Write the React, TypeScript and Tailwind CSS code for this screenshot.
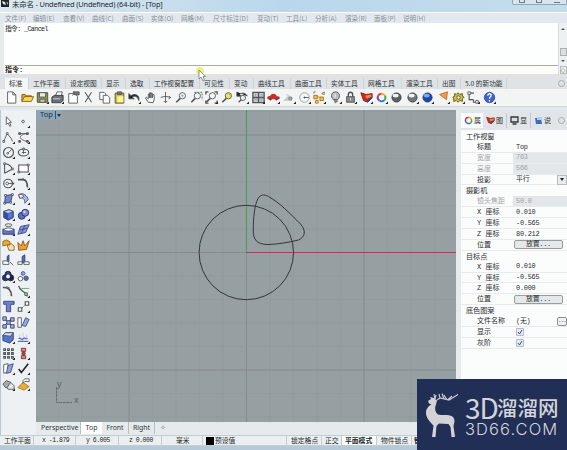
import type { ReactNode } from "react";

const menus = [
  { label: "文件(F)", w: "w-[28px]" },
  { label: "编辑(E)", w: "w-[30px]" },
  { label: "查看(V)", w: "w-[29px]" },
  { label: "曲线(C)", w: "w-[30px]" },
  { label: "曲面(S)", w: "w-[29px]" },
  { label: "实体(O)", w: "w-[30px]" },
  { label: "网格(M)", w: "w-[32px]" },
  { label: "尺寸标注(D)", w: "w-[44px]" },
  { label: "变动(T)", w: "w-[29px]" },
  { label: "工具(L)", w: "w-[29px]" },
  { label: "分析(A)", w: "w-[30px]" },
  { label: "渲染(R)", w: "w-[29px]" },
  { label: "面板(P)", w: "w-[29px]" },
  { label: "说明(H)", w: "w-[29px]" },
];

const toolTabs = [
  { label: "标准", w: "w-[24px]" },
  { label: "工作平面", w: "w-[37px]" },
  { label: "设定视图", w: "w-[36px]" },
  { label: "显示", w: "w-[24px]" },
  { label: "选取", w: "w-[24px]" },
  { label: "工作视窗配置", w: "w-[50px]" },
  { label: "可见性", w: "w-[30px]" },
  { label: "变动", w: "w-[24px]" },
  { label: "曲线工具", w: "w-[37px]" },
  { label: "曲面工具", w: "w-[36px]" },
  { label: "实体工具", w: "w-[37px]" },
  { label: "网格工具", w: "w-[38px]" },
  { label: "渲染工具", w: "w-[36px]" },
  { label: "出图", w: "w-[23px]" },
  { label: "5.0 的新功能", w: "w-[46px]" },
];

// Every glyph is drawn on a 15x15 grid
const Corner = () => <path d="M15 12v3h-3z" fill="#222" stroke="none" />;

const Icon = ({ children, more }: { children: ReactNode; more?: boolean }) => (
  <svg viewBox="0 0 15 15" className="h-[13px] w-[13px]" fill="none" stroke="#505457" strokeWidth="1">
    {children}
    {more && <Corner />}
  </svg>
);

const Wheel = () => (
  <g strokeWidth="2.2">
    <path d="M7.5 3a4.5 4.5 0 0 1 4 2.5" stroke="#e8b020" />
    <path d="M11.5 5.5a4.5 4.5 0 0 1-1 5.4" stroke="#48a848" />
    <path d="M10.5 10.9a4.5 4.5 0 0 1-5.5 0" stroke="#2878d0" />
    <path d="M5 10.9a4.5 4.5 0 0 1-1.5-5.4" stroke="#8040b0" />
    <path d="M3.5 5.5a4.5 4.5 0 0 1 4-2.5" stroke="#e03030" />
  </g>
);

const Shield = () => (
  <>
    <path d="M1 2l6 2 7-1v5l-5 5-5-2z" fill="#d8281c" stroke="#801810" />
    <path d="M6 5.500l7-1.500v3L8 9z" fill="#f09030" stroke="none" />
    <path d="M7 10l6-3v2l-4 4z" fill="#2848a8" stroke="none" />
  </>
);

const Ball = ({ fill, shine }: { fill: string; shine: string }) => (
  <>
    <circle cx="7.5" cy="7.5" r="5.3" fill={fill} stroke="#383c44" />
    <ellipse cx="6.5" cy="5.3" rx="3.500" ry="2.200" fill={shine} stroke="none" />
  </>
);

const Lens = ({ fill = "#f4f6f7" }: { fill?: string }) => (
  <>
    <circle cx="8.5" cy="5.5" r="3.6" fill={fill} />
    <path d="M6 8.5L1.5 13" strokeWidth="1.8" />
  </>
);

const standardTools: { more?: boolean; art: ReactNode }[] = [
  { art: <path d="M3 1h6l3.500 3.500V14H3zM9 1v3.500h3.500" fill="#fff" /> },
  { art: <><path d="M1 12V4h4l1 1.500h6V7" fill="#e8a820" stroke="#7c5a10" /><path d="M1 12l3-5.500h10.500L12 12z" fill="#fbd858" stroke="#7c5a10" /></> },
  { more: true, art: <><path d="M1.500 2h12v11h-12z" fill="#909646" stroke="#44482a" /><path d="M4 2h7v5H4z" fill="#e9ecea" /><path d="M4.500 9.500h6V13h-6z" fill="#c8ccc4" /></> },
  { more: true, art: <><path d="M5 6l2-5h6l-1 5" fill="#fff" /><path d="M1 7l3-2h10v6l-3 2.500H1z" fill="#6c7178" stroke="#33363a" /><path d="M2.500 9h8" stroke="#dde" /></> },
  { art: <><path d="M2 3h7l3 3v8H2z" fill="#fff" /><path d="M7 1h7v3.500H9zM6 5l3-2" fill="#777" /></> },
  { art: <path d="M3.500 1.500l7.500 11.500M11 1.500L3.500 13" strokeWidth="1.200" /> },
  { art: <><path d="M2 1.500h5l2 2V10H2z" fill="#fff" /><path d="M6 5h5l2.500 2.500V14H6z" fill="#fff" /></> },
  { art: <><path d="M2.500 2.500h10V14h-10z" fill="#d8c034" stroke="#4e4820" /><path d="M5 1h5v3H5z" fill="#777" /><path d="M5 6h7v7H5z" fill="#fff59b" stroke="none" /></> },
  { more: true, art: <path d="M1 3v6h6L5 7c3-2 6-1 7.500 4 1.500-6-4.500-9-9-5.500z" fill="#222" /> },
  { art: <path d="M5 13L1.500 8l1.200-.8L5 9V3.500h1.500V8 2H8v6-5.500h1.500V8l.5-4h1.500L12 9l-1.500 4.500z" fill="#f3f3f0" /> },
  { art: <><path d="M7.500 1v12M5.500 11.500l2 2 2-2M2 7.500c3-1.500 8-1.500 11 0" /><path d="M11 9l2.500-1.500-2-1.500" /></> },
  { art: <><Lens /><path d="M7 5.500h3M8.500 4v3" stroke="#999" /></> },
  { art: <><path d="M5 1.500h9v9" strokeDasharray="2 1.500" /><Lens /></> },
  { more: true, art: <><path d="M1 4V1h3M11 1h3v3M14 11v3h-3M4 14H1v-3" strokeWidth="1.500" /><Lens /></> },
  { art: <><Lens fill="#ede45c" /><path d="M9 3l2 2" stroke="#b3901c" /></> },
  { more: true, art: <><path d="M1 1v5h5L4 4c4-3 8-1 9 2" fill="#222" /><circle cx="8" cy="8" r="3" fill="#eee" /><path d="M6 10l-3 3" strokeWidth="1.600" /></> },
  { more: true, art: <><path d="M1 1.500h13v12H1zM7.500 1.500v12M1 7.500h13" fill="#c5cbcc" strokeWidth="1.500" /><path d="M4 3v3M10.500 9v3M3 10h3M10 4.500h3" stroke="#999" /></> },
  { more: true, art: <><path d="M1 9V7l3-1 1.500-2h4L11 6.500l3 .5v2z" fill="#d32b29" stroke="#b02222" /><circle cx="4" cy="9.500" r="1" fill="#333" /><circle cx="11" cy="9.500" r="1" fill="#333" /></> },
  { more: true, art: <><path d="M1 11l5-5 4 5z" fill="#c4c8c9" stroke="#c9cdce" /><circle cx="8.500" cy="8.500" r="2" fill="#9ca0a1" stroke="#888" /><path d="M4 4l5 3" stroke="#bbb" /></> },
  { more: true, art: <><circle cx="7.500" cy="7.500" r="5.500" stroke="#95999b" /><path d="M7.500 7.500h5" /><circle cx="7.500" cy="7.500" r=".7" fill="#333" /></> },
  { more: true, art: <><path d="M1 5h4v4H1zM8 7h4v4H8z" fill="#f1c83c" stroke="#a36c20" /><path d="M1 3V1h2M13 1v3l-3-1z" stroke="#7b7348" /><path d="M5 6l4 2" stroke="#b57b28" /><path d="M3 11h3v3H3z" fill="#f6e17c" stroke="#a36c20" /></> },
  { more: true, art: <><path d="M5 10C1 6 3 1 7.500 1S14 6 10 10z" fill="#b7bcbd" /><path d="M5.500 10.500h4.500M6 12h4M6.500 13.500h2" /><path d="M7 3v5" stroke="#fff" /></> },
  { more: true, art: <><path d="M5 7V4c0-3.500 5-3.500 5 0v3" strokeWidth="1.600" /><path d="M3 6.500h9V13H3z" fill="#868c90" /><path d="M7.500 8v3" stroke="#ddd" /></> },
  { more: true, art: <Shield /> },
  { more: true, art: <Wheel /> },
  { art: <Ball fill="#5b6064" shine="#f2f4f4" /> },
  { more: true, art: <Ball fill="#70777a" shine="#f4f5f6" /> },
  { more: true, art: <Ball fill="#1647b8" shine="#79aaf0" /> },
  { more: true, art: <path d="M3 4l9-3-1 9z" fill="#efa13d" stroke="#b96a28" /> },
  { more: true, art: <><path d="M3 3l2 1 2-2 2 2 3-1v3l2 1-2 2v3l-3-1-2 2-2-2-3 1V9L1 7l2-1z" fill="#d6bd35" stroke="#594f1b" /><circle cx="7.500" cy="7.500" r="2" fill="#f4f1d8" /></> },
  { more: true, art: <><path d="M4 2.500h4M2.500 4v6h5M7.500 10v3h4" strokeWidth="1.300" /><path d="M1 1h3v3H1zM10 11h3v3h-3z" fill="#fff" /></> },
  { more: true, art: <><circle cx="7.500" cy="7.500" r="6" fill="#3f62cc" stroke="#354d95" /><path d="M5.500 5.500c0-3 4-3 4-.5 0 2-2 1.500-2 3.800M7.500 10.500v1.500" stroke="#fff" strokeWidth="1.500" /></> },
];

const sideTools: { more?: boolean; art: ReactNode }[] = [
  { art: <path d="M5 2v9l2-2 2 4 1.500-.8L8.500 8.500H11z" fill="#fff" /> },
  { more: true, art: <circle cx="7" cy="7.500" r="1.500" /> },
  { more: true, art: <><path d="M2 12L6 3l5 6 1 3" /><path d="M1 11h2v2H1zM5 2h2v2H5z" fill="#fff" /></> },
  { more: true, art: <><path d="M3 3h9M11 3c-12 2-7 8 1 9" /><path d="M2 2h2v2H2zM11 2h2v2h-2zM2 11h2v2H2zM11 11h2v2h-2z" fill="#666" /></> },
  { more: true, art: <><circle cx="7.500" cy="7.500" r="5.700" strokeWidth="1.300" /><path d="M7 8l4-4" /><circle cx="6.500" cy="8.500" r="1" fill="#fff" /></> },
  { more: true, art: <><ellipse cx="7.500" cy="7.500" rx="6" ry="4" strokeWidth="1.300" /><path d="M7.500 2v7M5.500 7.500h5" /><path d="M6.500 2.500h2v2h-2z" fill="#fff" /></> },
  { more: true, art: <><path d="M3 13V2c6 0 8 4 9 6L3 13" strokeWidth="1.200" /><path d="M2 1h2v2H2zM11 7h2v2h-2z" fill="#fff" /></> },
  { more: true, art: <><path d="M2 3.500h11v8H2z" fill="#fff" strokeWidth="1.200" /><path d="M1 10.500h2v2H1zM12 2.500h2v2h-2z" fill="#fff" /></> },
  { more: true, art: <><circle cx="7" cy="7.500" r="5" strokeWidth="1.200" /><path d="M5 7.500h9M11 5.500l3 2-3 2" /><circle cx="6" cy="7.500" r="1.500" fill="#fff" /></> },
  { more: true, art: <><path d="M1 3h6c4 0 5 3 5 9" strokeWidth="1.800" /><path d="M7 1v3" /></> },
  { more: true, art: <><path d="M4 4l8-1-2 9-7 1z" fill="#7184cf" stroke="#323b6c" /><path d="M3 3h2v2H3zM11 2h2v2h-2zM2 12h2v2H2zM9 11h2v2H9z" fill="#fff" /></> },
  { more: true, art: <><path d="M2 3c5-3 10 1 11 6l-4 4C9 8 7 6 3 7z" fill="#a9b4e4" stroke="#4b537c" /><path d="M2 3c2-1 5 0 6 2L5 7H3z" fill="#eef" /></> },
  { more: true, art: <><path d="M2 4l6-2 5 2v7l-6 3-5-3z" fill="#2f4fb6" stroke="#263874" /><path d="M2 4l6-2 5 2-6 2.500z" fill="#bccaf4" /><path d="M7 6.500V13l5-2.300V4.500z" fill="#5776d4" stroke="none" /></> },
  { more: true, art: <><circle cx="5.500" cy="9" r="4" fill="#5c70c8" stroke="#202a5c" /><circle cx="9.500" cy="5.500" r="4" fill="#7b8cdc" stroke="#202a5c" /><circle cx="8.500" cy="4.500" r="1.300" fill="#dce3fc" stroke="none" /></> },
  { more: true, art: <><ellipse cx="7.500" cy="2.500" rx="4" ry="1.600" /><path d="M1 7h13v6H1z" fill="#5d74cc" stroke="#2b386f" /><ellipse cx="7.500" cy="7.500" rx="5" ry="1.800" fill="#fff" /></> },
  { more: true, art: <><path d="M4 4l10-2-4 9-9 2z" fill="#8698e0" stroke="#36427c" /><path d="M3 8l9-2M9 3L5 12" stroke="#36437f" /></> },
  { art: <><path d="M1 3l4-2 4 2v4H5L1 8z" fill="#f0a92b" stroke="#8b6523" /><path d="M6 7h3l1-2 4 3v5H8z" fill="#fce0a0" stroke="#7b6543" /></> },
  { art: <path d="M2 13L1 4l4 4 2-6 2 6 5-6-3 10z" fill="#eba22c" stroke="#86551b" /> },
  { art: <><path d="M8 1v7L6 10V3z" fill="#546dc8" stroke="#2b3971" /><path d="M1 8h5l2 2v2H1z" fill="#fff" /><path d="M9 9l4 4" /></> },
  { art: <><path d="M9 1v9H6V3z" fill="#546dc8" stroke="#2b3971" /><path d="M1 9h5v3H1zM8 9h6v3H8z" fill="#fff" /></> },
  { more: true, art: <><circle cx="7" cy="5" r="3.500" fill="#34477f" stroke="#171d38" /><circle cx="4" cy="9" r="3.500" fill="#283863" stroke="#171d38" /><circle cx="10" cy="9" r="3.500" fill="#1c284a" stroke="#171d38" /><circle cx="7" cy="7.500" r="2.200" fill="#f3f4f9" stroke="none" /></> },
  { art: <><circle cx="7" cy="4" r="2.200" fill="#8fa0df" stroke="#4c5e9c" /><circle cx="4" cy="10" r="2.600" fill="#fff" /><circle cx="10.500" cy="9.500" r="2.600" fill="#536bbc" /></> },
  { art: <><path d="M1 3c6-1 10 3 10 10" strokeWidth="1.800" /><path d="M5 2l4 2" stroke="#548652" strokeWidth="1.600" /></> },
  { more: true, art: <><path d="M2 1c1 6 5 5 8 9l2 3" strokeWidth="1.500" /><path d="M5 4h9" stroke="#68a065" /><path d="M9 9h3v3H9z" fill="#c4d3c2" /></> },
  { art: <path d="M2 1.500h12V5h-4v8.500H5V5H2z" fill="#6a80d6" stroke="#34427c" /> },
  { more: true, art: <><path d="M4 11l7-7" strokeDasharray="1.500 1" /><path d="M1.500 9h4v4h-4zM9.500 2h4v4h-4z" fill="#fff" strokeWidth="1.300" /></> },
  { art: <><path d="M3 3l8 8M11 3l-8 8" /><path d="M1 1h4v4H1zM10 2h4v4h-4zM5.500 5.500h4v4h-4zM1 10h4v4H1zM10 10h4v4h-4z" fill="#a7b4ea" stroke="#303b67" /></> },
  { art: <><path d="M1 2h4v11H1z" fill="#fff" /><path d="M10 2l4 2-4 8-4-1z" fill="#94a7eb" stroke="#3f4b7c" /></> },
  { more: true, art: <><path d="M1 5l3-3h9v8l-4 4-8-3z" fill="#5873cc" stroke="#2d3b74" /><path d="M1 5l3-3h9l-3 4z" fill="#d4dcf6" /></> },
  { more: true, art: <><path d="M1 12h12M2 9c2-3 3 3 5 0s3 2 5-1" stroke="#6073b5" strokeWidth="1.500" /><path d="M3 4v3M7 2v5M11 4v3" stroke="#c8cede" /></> },
  { more: true, art: <path d="M2 2h2v2H2zM6.500 2h2v2h-2zM11 2h2v2h-2zM2 6.500h2v2H2zM6.500 6.500h2v2h-2zM11 6.500h2v2h-2zM2 11h2v2H2zM6.500 11h2v2h-2zM11 11h2v2h-2z" fill="#cbd0d2" strokeWidth="1.200" /> },
  { more: true, art: <><path d="M7.500 2v11" stroke="#6b2424" strokeWidth="2" /><path d="M5 1.500h5V5H5zM5 10h5v3.500H5z" fill="#e98a81" stroke="#772e29" /><circle cx="7.500" cy="7.500" r="2" fill="#c73730" /></> },
  { more: true, art: <><path d="M2 3l5-1v10l-5 1z" fill="#fff" /><path d="M7 4l6-2-3 10-5 1z" fill="#8aa0eb" stroke="#3b4a82" /></> },
  { more: true, art: <path d="M2 8l3 4L13 2" stroke="#202224" strokeWidth="1.800" /> },
  { more: true, art: <><path d="M1 7l4-4 5 2-1 7-5-1z" fill="#a4a9ab" /><path d="M6 11l4-6 4 4v4H7z" fill="#e3e5e5" /></> },
  { more: true, art: <><path d="M1 11l6-6 7 5-6 4z" fill="#e8ac37" stroke="#9d7b3d" /><path d="M7 3l2-2h5v3H9L7 6z" fill="#fff" /></> },
];

type Row =
  | { kind: "head"; label: string }
  | { kind: "text" | "dim" | "select" | "button" | "file" | "check"; label: string; value?: string };

const rows: Row[] = [
  { kind: "head", label: "工作视窗" },
  { kind: "text", label: "标题", value: "Top" },
  { kind: "dim", label: "宽度", value: "763" },
  { kind: "dim", label: "高度", value: "566" },
  { kind: "select", label: "投影", value: "平行" },
  { kind: "head", label: "摄影机" },
  { kind: "dim", label: "镜头焦距", value: "50.0" },
  { kind: "text", label: "X 座标", value: "0.010" },
  { kind: "text", label: "Y 座标", value: "-0.565" },
  { kind: "text", label: "Z 座标", value: "80.212" },
  { kind: "button", label: "位置", value: "放置..." },
  { kind: "head", label: "目标点" },
  { kind: "text", label: "X 座标", value: "0.010" },
  { kind: "text", label: "Y 座标", value: "-0.565" },
  { kind: "text", label: "Z 座标", value: "0.000" },
  { kind: "button", label: "位置", value: "放置..." },
  { kind: "head", label: "底色图案" },
  { kind: "file", label: "文件名称", value: "(无)" },
  { kind: "check", label: "显示" },
  { kind: "check", label: "灰阶" },
];

const PropertyRow = ({ row }: { row: Row }) => {
  if (row.kind === "head") {
    return <div className="h-[10.9px] pl-[5px] text-[7.2px] leading-[11px] tracking-[-0.1px]">{row.label}</div>;
  }
  const dim = row.kind === "dim";
  return (
    <div className="flex h-[10.9px] border-b border-[#e8ebeb] text-[7.2px] leading-[10.5px]">
      <span className={`w-[52px] whitespace-nowrap pl-[16px] font-['Liberation_Mono','Noto_Sans_CJK_SC',monospace] text-[7px] ${dim ? "text-[#a2a5a6]" : ""}`}>
        {row.label}
      </span>
      <span className={`flex flex-1 items-center pl-[3px] font-['Liberation_Mono','Noto_Sans_CJK_SC',monospace] text-[6.900px] tracking-[-0.25px] ${dim ? "bg-[#e4e7e9] text-[#a2a5a6]" : ""}`}>
        {row.kind === "button" ? (
          <span className="-ml-[2px] h-[9px] w-[49px] rounded-[2px] border border-[#999d9e] bg-[#e5e8e8] text-center leading-[7px]">
            {row.value}
          </span>
        ) : row.kind === "check" ? (
          <svg viewBox="0 0 8 8" className="h-[8px] w-[8px]">
            <path d="M.5.5h7v7h-7z" fill="#e6e9f2" stroke="#b3bac9" />
            <path d="M2 4l1.500 2L6 2" fill="none" stroke="#414b83" />
          </svg>
        ) : (
          <span className="flex-1">{row.value}</span>
        )}
        {row.kind === "select" && (
          <span className="flex h-[10px] w-[10px] items-center justify-center border border-[#b9bdbe] bg-[#e9ecec]">
            <span className="border-x-2 border-t-[3px] border-x-transparent border-t-[#222]" />
          </span>
        )}
        {row.kind === "file" && (
          <span className="h-[9px] w-[10px] rounded-[2px] border border-[#8c9091] bg-[#eff1f1] text-center text-[6px] leading-[5px] tracking-[-1px]">
            ...
          </span>
        )}
      </span>
    </div>
  );
};

const TitleBar = () => (
  <div className="flex h-[12px] items-start justify-between bg-gradient-to-r from-[#dce8ee] via-[#b9d7ec] to-[#c3ddeb]">
    <div className="flex">
      <svg viewBox="0 0 10 8" className="h-[8px] w-[10px]">
        <path d="M1 0h8v7H1z" fill="#1e2325" />
        <path d="M2 1l3 1 1 3-3-1zM6 1l2 2v2z" fill="#e7ecec" />
      </svg>
      <span className="ml-[2px] whitespace-nowrap font-['Noto_Sans','Noto_Sans_CJK_SC',sans-serif] text-[7.400px] leading-[8px] tracking-[-0.160px] text-[#222b31]">
        未命名 - Undefined (Undefined) (64-bit) - [Top]
      </span>
    </div>
    <div className="flex h-[5px] w-[55px] justify-around rounded-b-[2px] border border-t-0 border-[#8da7b7] bg-[#d8e6ec]">
      <span className="h-[3px] w-[6px] border border-t-0 border-[#6b7d88]" />
      <span className="h-[3px] w-[6px] border border-t-0 border-[#6b7d88]" />
      <span className="h-[3px] w-[6px] border-b border-[#6b7d88]" />
    </div>
  </div>
);

const CommandArea = () => (
  <div className="flex h-[51px] pl-[4px]">
    <div className="flex flex-1 flex-col bg-[#fdfefe] pl-[1px] font-['Liberation_Mono','Noto_Sans_CJK_SC',monospace] text-[6.7px] text-[#222]">
      <div className="h-[43px] border-b border-[#aeb184] pt-[1px] leading-[10px] tracking-[-0.6px]">指令: _Cancel</div>
      <div className="text-[7px] font-bold leading-[8px]">指令:</div>
    </div>
    <div className="flex w-[9px] flex-col items-center border-l border-[#d9dddd] bg-[#eef1f1] pt-[5px]">
      <span className="border-x-2 border-b-[2px] border-x-transparent border-b-[#555]" />
      <span className="mt-[18px] h-[8px] w-[7px] border border-[#acb1b2] bg-[#dce0e0]" />
      <span className="mt-[4px] border-x-2 border-t-[2px] border-x-transparent border-t-[#555]" />
      <span className="mt-[4px] h-[8px] w-[7px] border border-[#b7bcbc] text-center text-[5px] leading-[5px]">◇</span>
    </div>
  </div>
);

const grid = [-8, -7, -6, -5, -4, -3, -2, -1, 0, 1, 2, 3, 4, 5, 6, 7, 8];

const Viewport = () => (
  <div className="relative h-[312px] w-[420px] bg-[#969fa1]">
    <svg viewBox="36 110 420 312" className="block h-[312px] w-[420px]" fill="none">
      {grid.map((n) => (
        <g key={n} stroke={n % 5 === 0 ? "#7d8789" : "#909a9c"} strokeWidth=".8">
          <path d={`M${246.5 + n * 23.5} 110V422`} />
          <path d={`M36 ${252.5 + n * 23.5}H456`} />
        </g>
      ))}
      <path d="M246.5 110V252" stroke="#43a052" />
      <path d="M246.5 252.5H456" stroke="#9d4458" />
      <circle cx="246.3" cy="252.5" r="47.2" stroke="#30373a" />
      <path
        d="M258 198.5C260.500 194.500 264 194 268.500 196.500C280 203 290 213.500 300.500 224C306.500 231 305 237 298.500 240C288 242.500 277 244.500 267 244.500C257 244 253 240 253.300 230C253.300 218 254.500 205 258 198.500Z"
        stroke="#30373a"
      />
      <path d="M56.500 387V402.500H72" stroke="#626d70" strokeDasharray="3 .6" />
    </svg>
    <div className="absolute left-0 top-0 flex h-[10px] w-[26px] items-center bg-[#8ba6b7] pl-[4px] font-['Noto_Sans',sans-serif] text-[7.6px] text-[#25333d]">
      Top
      <span className="ml-[2px] h-[8px] border-l border-[#40515d]" />
      <span className="ml-[1px] border-x-2 border-t-[3px] border-x-transparent border-t-[#25333d]" />
    </div>
    <span className="absolute left-[21px] top-[269px] font-['Liberation_Sans',sans-serif] text-[9px] leading-[10px] text-[#576265]">y</span>
    <span className="absolute left-[38px] top-[285px] font-['Liberation_Sans',sans-serif] text-[9px] leading-[10px] text-[#576265]">x</span>
  </div>
);

const ViewTabs = () => (
  <div className="flex h-[12px] pl-[1px] font-['Noto_Sans',sans-serif] text-[6.9px] leading-[12px] text-[#30363a]">
    <span className="w-[44px] border-r border-[#b9bfc1] pl-[4px]">Perspective</span>
    <span className="w-[21px] bg-white text-center">Top</span>
    <span className="w-[27px] border-r border-[#b9bfc1] text-center">Front</span>
    <span className="w-[26px] border-r border-[#b9bfc1] text-center">Right</span>
    <span className="w-[16px] text-center text-[#7c8385]">✧</span>
  </div>
);

const PropertiesPanel = () => (
  <div className="flex w-[111px] pl-[5px]">
    <div className="flex-1 bg-[#fbfcfc] text-[#2b2f31]">
      <div className="mb-[1px] flex h-[20px] items-center bg-[#e2e5e7] pt-[1px] text-[7px]">
        <span className="flex h-[15px] w-[22px] items-center bg-[#fbfcfc] pl-[3px]">
          <svg viewBox="1 1 13 13" className="mr-[1px] h-[9px] w-[9px]" fill="none"><Wheel /></svg>属
        </span>
        <span className="flex h-[15px] w-[24px] items-center border-r border-[#c4c9cb] pl-[3px]">
          <svg viewBox="0 0 15 15" className="mr-[1px] h-[9px] w-[9px]"><Shield /></svg>图
        </span>
        <span className="flex h-[15px] w-[24px] items-center border-r border-[#c4c9cb] pl-[3px]">
          <svg viewBox="0 0 9 9" className="mr-[1px] h-[9px] w-[9px]">
            <path d="M1 1h7v5H1zM2.500 8h4" fill="#d6dfe4" stroke="#2f363a" strokeWidth="1.300" />
          </svg>显
        </span>
        <span className="flex h-[15px] w-[24px] items-center pl-[3px]">
          <svg viewBox="0 0 9 9" className="mr-[1px] h-[9px] w-[9px]">
            <path d="M1 2h6l1 6H2z" fill="#3d6dc3" />
            <path d="M3 1h5v3H3z" fill="#b5cced" />
          </svg>说
        </span>
        <span className="ml-[3px] h-[7px] w-[7px] rounded-full border border-[#a6acae]" />
      </div>
      {rows.map((row, i) => (
        <PropertyRow key={i} row={row} />
      ))}
    </div>
  </div>
);

const StatusBar = () => (
  <div className="flex h-[11px] items-center border-y border-[#c7cccd] bg-[#eceff1] text-[6.8px] leading-[9px] text-[#24292b]">
    <span className="w-[34px] whitespace-nowrap border-r border-[#c7cccd] pl-[4px] tracking-[-0.1px]">工作平面</span>
    <span className="w-[42px] border-r border-[#c7cccd] pl-[8px] font-['Liberation_Mono',monospace] text-[6.5px] tracking-[-0.5px]">x -1.879</span>
    <span className="w-[43px] border-r border-[#c7cccd] pl-[10px] font-['Liberation_Mono',monospace] text-[6.5px] tracking-[-0.5px]">y 6.005</span>
    <span className="w-[43px] border-r border-[#c7cccd] pl-[10px] font-['Liberation_Mono',monospace] text-[6.5px] tracking-[-0.5px]">z 0.000</span>
    <span className="w-[41px] border-r border-[#c7cccd] pl-[14px]">毫米</span>
    <span className="flex w-[84px] items-center border-r border-[#c7cccd] pl-[3px]">
      <span className="mr-[1px] h-[8px] w-[8px] bg-black" />预设值
    </span>
    <span className="w-[35px] border-r border-[#c7cccd] pl-[4px]">锁定格点</span>
    <span className="w-[20px] border-r border-[#c7cccd] pl-[3px]">正交</span>
    <span className="w-[35px] border-r border-[#c7cccd] bg-white pl-[3px] font-bold">平面模式</span>
    <span className="w-[35px] border-r border-[#c7cccd] pl-[4px]">物件锁点</span>
    <span className="pl-[2px] font-bold">智</span>
  </div>
);

const Watermark = () => (
  <div className="absolute bottom-0 right-0 flex h-[71px] w-[150px] bg-[#212f56] text-[#d3d5da]">
    <svg viewBox="0 0 48 71" className="h-[71px] w-[48px] shrink-0">
      <path
        d="M11 22L14 20L13 18L17 19L20 21.500L19 25.500C17.500 29 18 33 21 35.500C25 36.500 29 35.500 33 36.500C36 37 37.500 39 37.500 42.500L36.500 47L38 58H34.500L33.500 48L31.500 45L22 44.500L19.500 47L18.500 58H15L16.500 46.500C13 43 9 39 9 34C9 29.500 11.500 27 14.500 25.500L12 24.500Z"
        fill="#d3d3d5"
      />
      <path
        d="M18 20L17 15M18 20L19 16M20 21L23 19L32 21L41 15.500M23 19L22 15M27 20L25 14.500M31 20.500L35 17M30 21L27 16"
        fill="none"
        stroke="#c8c9cc"
        strokeWidth="1.200"
      />
    </svg>
    <div className="whitespace-nowrap">
      <div className="mt-[14px] flex h-[28px] items-center">
        <span className="w-[32px] font-['Noto_Sans_CJK_SC',sans-serif] text-[28px] leading-[28px] tracking-[-1px]">3D</span>
        <span className="font-['Noto_Sans_CJK_SC',sans-serif] text-[20.5px] font-medium leading-[28px]">溜溜网</span>
      </div>
      <div className="mt-[1px] font-['Inter',sans-serif] text-[16.5px] font-light leading-[14px] tracking-[1.1px]">3D66.COM</div>
    </div>
  </div>
);

const App = () => (
  <div className="relative flex h-[450px] w-[567px] flex-col overflow-hidden bg-[#e5eaed] font-['Noto_Sans_CJK_SC',sans-serif]">
    <TitleBar />
    <nav className="flex h-[11px] border-t border-white bg-[#e3e8f0] pl-[5px] text-[6.6px] leading-[10px] text-[#899095]">
      {menus.map((m) => (
        <span key={m.label} className={`shrink-0 whitespace-nowrap ${m.w}`}>{m.label}</span>
      ))}
    </nav>
    <CommandArea />
    <div className="flex h-[15px] items-end bg-[#dfe3e6] pl-[5px] text-[6.7px] leading-[11px] text-[#2d3235]">
      {toolTabs.map((t, i) => (
        <span
          key={t.label}
          className={`h-[11px] shrink-0 whitespace-nowrap border-r border-[#ced3d6] pl-[4px] ${t.w} ${i === 0 ? "bg-[#f5f7f7]" : ""}`}
        >
          {t.label}
        </span>
      ))}
      <span className="mb-[2px] ml-auto mr-[2px] h-[7px] w-[7px] rounded-full border border-[#a6acae]" />
    </div>
    <div className="flex h-[17px] items-center bg-[#f3f5f5] pl-[4px]">
      {standardTools.map((t, i) => (
        <span key={i} className="flex w-[15.42px] shrink-0 justify-center">
          <Icon more={t.more}>{t.art}</Icon>
        </span>
      ))}
    </div>
    <div className="h-[4px] border-t border-[#d4d7cf] bg-[#e3e8eb]" />
    <div className="flex h-[325px]">
      <div className="w-[36px] border-l border-[#b9c8d2] bg-[#eef1f3] pt-[4px]">
        <div className="grid auto-rows-[15.45px] grid-cols-[15px_15px] items-center justify-items-center">
          {sideTools.map((t, i) => (
            <Icon key={i} more={t.more}>{t.art}</Icon>
          ))}
        </div>
      </div>
      <div className="w-[420px]">
        <Viewport />
        <ViewTabs />
      </div>
      <PropertiesPanel />
    </div>
    <StatusBar />
    <div className="h-[4px] bg-[#b4cadb]" />
    {/* Pointer with its click highlight */}
    <svg viewBox="0 0 14 16" className="absolute left-[194px] top-[66px] h-[16px] w-[14px]">
      <circle cx="6" cy="5" r="4" fill="#e5ed5c" opacity=".8" />
      <path d="M5 4v9l2-2 2 4 1.500-.8L9 10.500h2.500z" fill="#fff" stroke="#777" strokeWidth=".8" />
    </svg>
    <Watermark />
  </div>
);

export default App;
